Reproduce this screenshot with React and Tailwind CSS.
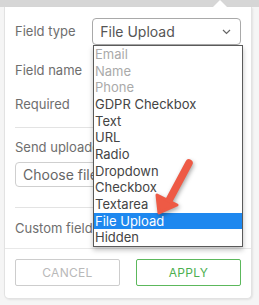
import React from 'react'

const options = [
  { label: 'Email', disabled: true },
  { label: 'Name', disabled: true },
  { label: 'Phone', disabled: true },
  { label: 'GDPR Checkbox' },
  { label: 'Text' },
  { label: 'URL' },
  { label: 'Radio' },
  { label: 'Dropdown' },
  { label: 'Checkbox' },
  { label: 'Textarea' },
  { label: 'File Upload', selected: true },
  { label: 'Hidden' },
]

function Arrow() {
  return (
    <svg className="absolute left-[150px] top-[150px] drop-shadow-[1px_2px_2px_rgba(0,0,0,0.35)]" width="48" height="70" viewBox="0 0 48 70">
      <path d="M39 13 L16 56" stroke="#ee5a45" strokeWidth="7.5" strokeLinecap="round" fill="none" />
      <path d="M9 63 L7 45 L27 55 Z" fill="#ee5a45" stroke="#ee5a45" strokeWidth="3" strokeLinejoin="round" />
    </svg>
  )
}

export default function App() {
  return (
    <div className="relative w-[259px] h-[305px] bg-[#f5f5f5] overflow-hidden font-['Inter',sans-serif]">
      <div className="h-[7px] bg-[#d6d6d6]" />
      <div className="relative ml-[4px] w-[248px] h-[292px] bg-white rounded-b-[5px] border border-t-0 border-[#e2e2e2] shadow-[1px_1px_2px_rgba(0,0,0,0.08)] px-[10px] pt-[11px]">
        {/* notch */}
        <div className="absolute -top-[7px] left-[208px] w-0 h-0 border-l-[7px] border-r-[7px] border-b-[7px] border-l-transparent border-r-transparent border-b-white" />

        <div className="flex items-center h-[27px]">
          <span className="w-[78px] text-[13px] text-[#6e6e6e]">Field type</span>
          <div className="flex items-center justify-between w-[150px] h-[27px] border border-[#a9a9a9] rounded-[4px] pl-[7px] pr-[9px] text-[14px] text-[#555]">
            <span>File Upload</span>
            <svg width="9" height="6" viewBox="0 0 9 6"><path d="M1 1 L4.5 4.5 L8 1" stroke="#666" strokeWidth="1.2" fill="none" /></svg>
          </div>
        </div>
        <div className="flex items-center h-[32px] mt-[10px] text-[13px] text-[#6e6e6e]">Field name</div>
        <div className="flex items-center h-[36px] text-[13px] text-[#6e6e6e]">Required</div>
        <div className="mt-[4px] border-t border-[#e3e3e3]" />
        <div className="mt-[11px] h-[16px] leading-[16px] text-[13px] text-[#6e6e6e] whitespace-nowrap">Send uploaded files to</div>
        <div className="mt-[7px] flex items-center w-[226px] h-[25px] border border-[#cfcfcf] rounded-[4px] pl-[7px] text-[14px] text-[#666] whitespace-nowrap">Choose file</div>
        <div className="mt-[20px] border-t border-[#e3e3e3]" />
        <div className="mt-[13px] h-[14px] leading-[14px] text-[13px] text-[#6e6e6e] whitespace-nowrap">Custom fields</div>
        <div className="mt-[13px] -mx-[10px] border-t border-[#e8e8e8]" />
        <div className="mt-[10px] flex justify-between">
          <button className="w-[105px] h-[27px] border border-[#cdcdcd] rounded-[2px] text-[12px] text-[#b9b9b9] tracking-[0.3px]">CANCEL</button>
          <button className="w-[105px] h-[27px] border border-[#5cb85c] rounded-[2px] text-[12px] text-[#4caf50] tracking-[0.3px]">APPLY</button>
        </div>
      </div>

      {/* open select list */}
      <div className="absolute left-[93px] top-[45px] w-[150px] h-[202px] bg-white border border-[#5a5a5a] shadow-[0_3px_5px_rgba(0,0,0,0.25)]">
        {options.map((o) => (
          <div
            key={o.label}
            className={
              o.selected
                ? 'h-[16.67px] leading-[16.67px] px-[1px] text-[13px] bg-[#1e88ef] text-white'
                : o.disabled
                ? 'h-[16.67px] leading-[16.67px] px-[1px] text-[13px] text-[#aaaaaa]'
                : 'h-[16.67px] leading-[16.67px] px-[1px] text-[13px] text-[#444]'
            }
          >
            {o.label}
          </div>
        ))}
      </div>
      <Arrow />
    </div>
  )
}
